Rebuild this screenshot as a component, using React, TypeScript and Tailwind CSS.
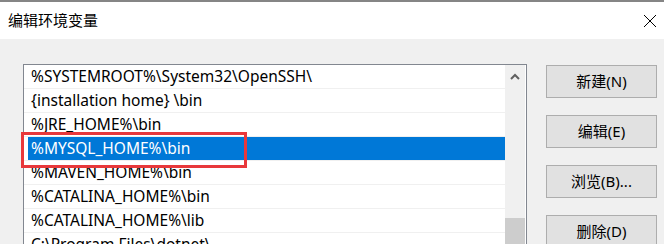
import React from 'react';

const ROWS = [
  '%SYSTEMROOT%\\System32\\OpenSSH\\',
  '{installation home} \\bin',
  '%JRE_HOME%\\bin',
  '%MYSQL_HOME%\\bin',
  '%MAVEN_HOME%\\bin',
  '%CATALINA_HOME%\\bin',
  '%CATALINA_HOME%\\lib',
  'C:\\Program Files\\dotnet\\',
];

const BUTTONS = ['新建(N)', '编辑(E)', '浏览(B)...', '删除(D)'];

const font = { fontFamily: '"Noto Sans", "Noto Sans CJK SC", sans-serif' };

const App: React.FC = () => {
  return (
    <div
      className="w-[664px] h-[244px] overflow-hidden bg-[#f0f0f0] border-t-2 border-[#858585] text-black"
      style={font}
    >
      {/* title bar */}
      <div className="h-[37px] bg-white flex items-center justify-between pl-[8px] pr-[4px]">
        <span className="text-[15px] leading-none">编辑环境变量</span>
        <svg width="14" height="14" viewBox="0 0 14 14" className="mr-[3px]">
          <path d="M1 1 L13 13 M13 1 L1 13" stroke="#000" strokeWidth="1" />
        </svg>
      </div>

      <div className="flex pl-[23px] pt-[25px]">
        {/* list box */}
        <div className="relative w-[504px] h-[200px] border border-[#828790] bg-white flex">
          <div className="flex-1 flex flex-col overflow-hidden">
            {ROWS.map((row, i) =>
              i === 3 ? (
                <div key={i} className="h-[24px] pl-[4px] border-b border-[#f0f0f0] flex">
                  <div className="flex-1 bg-[#0078d7] text-white flex items-center pl-[3px] text-[15.5px] leading-none">
                    {row}
                  </div>
                </div>
              ) : (
                <div
                  key={i}
                  className="h-[24px] shrink-0 pl-[7px] border-b border-[#f0f0f0] flex items-center text-[15.5px] leading-none whitespace-nowrap"
                >
                  {row}
                </div>
              )
            )}
          </div>
          {/* scrollbar */}
          <div className="w-[20px] mr-[1px] bg-[#f0f0f0] flex flex-col">
            <div className="h-[24px] flex items-start justify-center pt-[8px]">
              <svg width="10" height="7" viewBox="0 0 10 7">
                <path d="M1 6 L5 2 L9 6" stroke="#606060" strokeWidth="2" fill="none" />
              </svg>
            </div>
            <div className="mt-[129px] flex-1 bg-[#cdcdcd]" />
          </div>

          {/* red highlight */}
          <div className="absolute left-[-3px] top-[67px] w-[226px] h-[36px] border-[3px] border-[#e8383b]" />
        </div>

        {/* buttons */}
        <div className="ml-[19px] mt-[1px] flex flex-col gap-[17px]">
          {BUTTONS.map((b) => (
            <div
              key={b}
              className="w-[111px] h-[33px] bg-[#e1e1e1] border border-[#adadad] flex items-center justify-center text-[15px]"
            >
              {b}
            </div>
          ))}
        </div>
      </div>
    </div>
  );
};

export default App;
